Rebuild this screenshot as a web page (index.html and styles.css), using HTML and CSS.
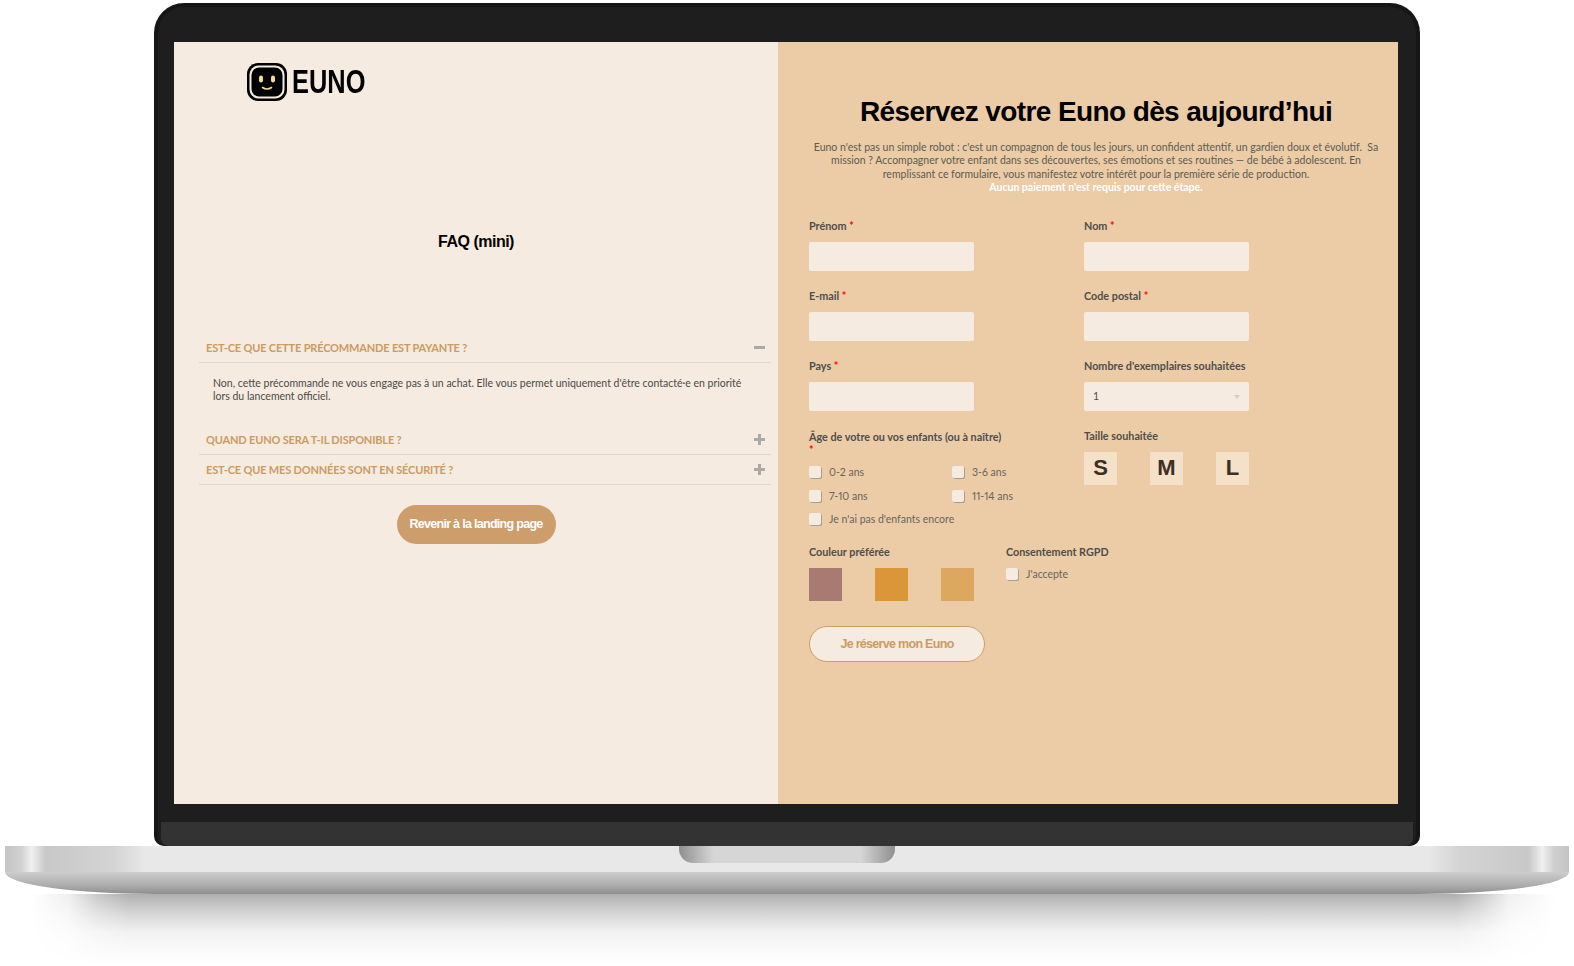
FILE: index.html
```html
<!DOCTYPE html>
<html lang="fr">
<head>
    <meta charset="UTF-8">
    <meta name="viewport" content="width=device-width, initial-scale=1.0">
    <title>Euno - Précommande</title>
    <link rel="stylesheet" href="styles.css">
</head>
<body>
    <div class="laptop">
        <div class="lid">
            <div class="screen">
                <!-- FAQ -->
                <section class="panel-faq">
                    <div class="logo">
                        <svg class="logo-mark" width="40" height="38" viewBox="0 0 40 38">
                            <rect x="0" y="0" width="40" height="38" rx="11" fill="#000"/>
                            <rect x="2.5" y="2.5" width="35" height="33" rx="9" fill="#f5ebe0"/>
                            <rect x="4.5" y="4.5" width="31" height="29" rx="7.5" fill="#000"/>
                            <rect x="12" y="12.5" width="4" height="7" rx="2" fill="#f6dc92"/>
                            <rect x="24" y="12.5" width="4" height="7" rx="2" fill="#f6dc92"/>
                            <path d="M15.5 24.5c2.8 1.8 6.2 1.8 9 0" fill="none" stroke="#f6dc92" stroke-width="1.6" stroke-linecap="round"/>
                        </svg>
                        <span class="logo-name">EUNO</span>
                    </div>
                    <h2 class="faq-title">FAQ (mini)</h2>
                    <div class="faq-list">
                        <div class="faq-question">
                            <span>Est-ce que cette précommande est payante ?</span>
                            <span class="faq-icon faq-icon-minus"></span>
                        </div>
                        <p class="faq-answer">Non, cette précommande ne vous engage pas à un achat. Elle vous permet uniquement d'être contacté·e en priorité lors du lancement officiel.</p>
                        <div class="faq-question">
                            <span>Quand Euno sera t-il disponible ?</span>
                            <span class="faq-icon"></span>
                        </div>
                        <div class="faq-question">
                            <span>Est-ce que mes données sont en sécurité ?</span>
                            <span class="faq-icon"></span>
                        </div>
                    </div>
                    <a class="btn-back" href="#">Revenir à la landing page</a>
                </section>

                <!-- Formulaire -->
                <section class="panel-form">
                    <h1>Réservez votre Euno dès aujourd’hui</h1>
                    <p class="intro">Euno n'est pas un simple robot : c'est un compagnon de tous les jours, un confident attentif, un gardien doux et évolutif.&nbsp; Sa mission ? Accompagner votre enfant dans ses découvertes, ses émotions et ses routines — de bébé à adolescent. En remplissant ce formulaire, vous manifestez votre intérêt pour la première série de production.<br><strong>Aucun paiement n'est requis pour cette étape.</strong></p>

                    <form class="form-grid">
                        <div class="field">
                            <label class="field-label" for="prenom">Prénom <em>*</em></label>
                            <input type="text" id="prenom">
                        </div>
                        <div class="field">
                            <label class="field-label" for="nom">Nom <em>*</em></label>
                            <input type="text" id="nom">
                        </div>
                        <div class="field">
                            <label class="field-label" for="email">E-mail <em>*</em></label>
                            <input type="text" id="email">
                        </div>
                        <div class="field">
                            <label class="field-label" for="cp">Code postal <em>*</em></label>
                            <input type="text" id="cp">
                        </div>
                        <div class="field">
                            <label class="field-label" for="pays">Pays <em>*</em></label>
                            <input type="text" id="pays">
                        </div>
                        <div class="field">
                            <label class="field-label" for="nombre">Nombre d'exemplaires souhaitées</label>
                            <div class="select-wrap">
                                <select id="nombre">
                                    <option>1</option>
                                    <option>2</option>
                                </select>
                            </div>
                        </div>
                        <div class="field field-age">
                            <label class="field-label">Âge de votre ou vos enfants (ou à naître) <em>*</em></label>
                            <div class="check-grid">
                                <label class="check"><input type="checkbox"> 0-2 ans</label>
                                <label class="check"><input type="checkbox"> 3-6 ans</label>
                                <label class="check"><input type="checkbox"> 7-10 ans</label>
                                <label class="check"><input type="checkbox"> 11-14 ans</label>
                                <label class="check check-wide"><input type="checkbox"> Je n'ai pas d'enfants encore</label>
                            </div>
                        </div>
                        <div class="field">
                            <label class="field-label">Taille souhaitée</label>
                            <div class="tiles tiles-size">
                                <span class="tile size">S</span>
                                <span class="tile size">M</span>
                                <span class="tile size">L</span>
                            </div>
                        </div>
                    </form>

                    <div class="form-bottom">
                        <div class="field">
                            <label class="field-label">Couleur préférée</label>
                            <div class="tiles">
                                <span class="tile color-rose"></span>
                                <span class="tile color-orange"></span>
                                <span class="tile color-sand"></span>
                            </div>
                        </div>
                        <div class="field">
                            <label class="field-label">Consentement RGPD</label>
                            <label class="check"><input type="checkbox"> J'accepte</label>
                        </div>
                    </div>

                    <button class="btn-submit" type="button">Je réserve mon Euno</button>
                </section>
            </div>
            <div class="hinge"></div>
        </div>

        <div class="base">
            <div class="base-top"></div>
            <div class="notch"></div>
            <div class="base-edge"></div>
        </div>
        <div class="base-shadow"></div>
    </div>
</body>
</html>
```

FILE: styles.css
```css
* {
    box-sizing: border-box;
}

body {
    margin: 0;
    background: #fff;
    font-family: "Lato", "Noto Sans", sans-serif;
    overflow: hidden;
}

.laptop {
    width: 1574px;
    height: 966px;
    padding-top: 3px;
}

/* Ecran */
.lid {
    width: 1266px;
    height: 843px;
    margin-left: 154px;
    padding: 35px 18px 0 16px;
    background: #1e1e1e;
    border: 4px solid #161616;
    border-bottom: 0;
    border-radius: 30px 30px 10px 10px;
}

.screen {
    display: grid;
    grid-template-columns: 604px 620px;
    height: 762px;
}

.hinge {
    height: 24px;
    margin: 18px -15px 0 -13px;
    border-radius: 0 0 8px 8px;
    background: #333;
}

/* Partie gauche */
.panel-faq {
    display: flex;
    flex-direction: column;
    background: #f5ebe0;
}

.logo {
    display: flex;
    align-items: center;
    gap: 5px;
    height: 38px;
    margin: 21px 0 0 73px;
}

.logo-name {
    font-family: "Liberation Sans", Arial, sans-serif;
    font-size: 33px;
    font-weight: 700;
    color: #000;
    transform: scaleX(0.77);
    transform-origin: left center;
}

.faq-title {
    margin: 130px 0 0;
    font-family: "Liberation Sans", Arial, sans-serif;
    font-size: 16px;
    line-height: 22px;
    font-weight: 700;
    letter-spacing: -0.5px;
    text-align: center;
    color: #000;
}

.faq-list {
    width: 572px;
    margin: 80px 0 0 25px;
}

.faq-question {
    display: flex;
    justify-content: space-between;
    align-items: center;
    height: 30px;
    padding: 0 6px 0 7px;
    border-bottom: 1px solid #dcd8d2;
    font-size: 11px;
    font-weight: 700;
    letter-spacing: -0.17px;
    text-transform: uppercase;
    color: #cd9a62;
}

.faq-icon {
    position: relative;
    width: 11px;
    height: 11px;
}

.faq-icon::before,
.faq-icon::after {
    content: "";
    position: absolute;
    background: #aaa9a6;
}

.faq-icon::before {
    left: 0;
    right: 0;
    top: 4px;
    height: 3px;
}

.faq-icon::after {
    top: 0;
    bottom: 0;
    left: 4px;
    width: 3px;
}

.faq-icon-minus::after {
    display: none;
}

.faq-answer {
    margin: 0;
    padding: 14px 28px 22px 14px;
    font-size: 10.5px;
    line-height: 13px;
    color: #4c4a47;
}

.btn-back {
    align-self: center;
    width: 159px;
    height: 39px;
    margin-top: 20px;
    border-radius: 20px;
    background: #cd9d6b;
    font-family: "Liberation Sans", Arial, sans-serif;
    font-size: 12.5px;
    font-weight: 700;
    line-height: 39px;
    text-align: center;
    text-decoration: none;
    letter-spacing: -0.7px;
    color: #fff;
}

/* Partie droite */
.panel-form {
    padding: 0 15px 0 31px;
    background: #ebcca6;
}

.panel-form h1 {
    margin: 50px 0 0;
    font-family: "Liberation Sans", Arial, sans-serif;
    font-size: 28px;
    line-height: 40px;
    font-weight: 700;
    letter-spacing: -0.6px;
    text-align: center;
    color: #000;
}

.intro {
    margin: 9px 0 0;
    font-size: 10.5px;
    line-height: 13.4px;
    text-align: center;
    color: #605b52;
}

.intro strong {
    color: #fff;
}

.form-grid {
    display: grid;
    grid-template-columns: 275px 1fr;
    row-gap: 17px;
    margin-top: 23px;
}

.field-label {
    display: block;
    min-height: 16px;
    margin-bottom: 8px;
    padding-top: 2px;
    font-size: 10.8px;
    line-height: 12px;
    font-weight: 700;
    color: #4f4e4c;
}

.field em {
    font-style: normal;
    color: #f00;
}

.field input[type="text"],
.field select {
    display: block;
    width: 165px;
    height: 29px;
    padding: 0 9px;
    border: 0;
    border-radius: 2px;
    background: #f5ebe0;
    font-family: inherit;
    font-size: 10.5px;
    color: #4f4e4c;
    appearance: none;
}

.select-wrap {
    position: relative;
    width: 165px;
}

.select-wrap::after {
    content: "";
    position: absolute;
    right: 9px;
    top: 13px;
    border: 3px solid transparent;
    border-top: 4px solid #d8cfc4;
}

.field-age .field-label {
    max-width: 195px;
    margin-bottom: 5px;
    line-height: 13px;
}

.check-grid {
    display: grid;
    grid-template-columns: 143px 1fr;
    width: 210px;
}

.check-wide {
    grid-column: 1 / 3;
}

.check {
    display: flex;
    align-items: center;
    gap: 8px;
    height: 23.5px;
    font-size: 10.5px;
    font-variant-numeric: proportional-nums;
    color: #6a655c;
    white-space: nowrap;
}

.check input {
    width: 12px;
    height: 12px;
    margin: 0;
    border-radius: 2px;
    background: #f5ebe0;
    box-shadow: 1px 1px 0 #a89d8f;
    appearance: none;
}

.tiles {
    display: flex;
    justify-content: space-between;
    width: 165px;
    margin-top: 3px;
}

.tiles-size {
    margin-top: 2px;
}

.tile {
    width: 33px;
    height: 33px;
}

.size {
    background: #f5e0c8;
    font-family: "Liberation Sans", Arial, sans-serif;
    font-size: 22px;
    font-weight: 700;
    line-height: 31px;
    text-align: center;
    color: #3b3025;
}

.color-rose {
    background: #a87a72;
}

.color-orange {
    background: #da9638;
}

.color-sand {
    background: #dca860;
}

.form-bottom {
    display: grid;
    grid-template-columns: 197px 1fr;
    margin-top: 13px;
}

.form-bottom .check {
    height: 12px;
    margin-top: 2px;
}

.btn-submit {
    display: block;
    width: 176px;
    height: 36px;
    margin-top: 25px;
    border: 1px solid #cd9d6b;
    border-radius: 18px;
    background: #f5ebe0;
    font-family: "Liberation Sans", Arial, sans-serif;
    font-size: 12.5px;
    font-weight: 700;
    letter-spacing: -0.7px;
    color: #cd9a62;
}

/* Socle */
.base {
    position: relative;
    width: 1564px;
    margin-left: 5px;
}

.base-top {
    height: 26px;
    background: linear-gradient(to right, #c4c4c4 0, #d0d0d0 1%, #f0f0f0 1.7%, #c8c8c8 2.6%, #d4d4d4 7%, #e8e8e8 9%, #e8e8e8 91%, #d4d4d4 93%, #c8c8c8 97.4%, #f0f0f0 98.3%, #d0d0d0 99%, #c4c4c4 100%);
}

.base-edge {
    height: 22px;
    border-radius: 0 0 150px 150px / 0 0 22px 22px;
    background: linear-gradient(to bottom, #cdcdcd, #adadad 60%, #8e8e8e);
}

.notch {
    position: absolute;
    top: 0;
    left: 674px;
    width: 216px;
    height: 17px;
    border-radius: 0 0 14px 14px;
    background: linear-gradient(to right, #8f8f8f, #d6d6d6 16%, #d6d6d6 84%, #8f8f8f);
}

.base-shadow {
    width: 1525px;
    height: 70px;
    margin-left: 30px;
    background: linear-gradient(to bottom, #b0b0b0, #d8d8d8 30%, #f2f2f2 55%, #fff);
    -webkit-mask-image: linear-gradient(to right, transparent, rgba(0, 0, 0, 0.2) 2.5%, rgba(0, 0, 0, 0.7) 4.5%, #000 6.5%, #000 93.5%, rgba(0, 0, 0, 0.7) 95%, rgba(0, 0, 0, 0.2) 97%, transparent);
    mask-image: linear-gradient(to right, transparent, rgba(0, 0, 0, 0.2) 2.5%, rgba(0, 0, 0, 0.7) 4.5%, #000 6.5%, #000 93.5%, rgba(0, 0, 0, 0.7) 95%, rgba(0, 0, 0, 0.2) 97%, transparent);
}
```
